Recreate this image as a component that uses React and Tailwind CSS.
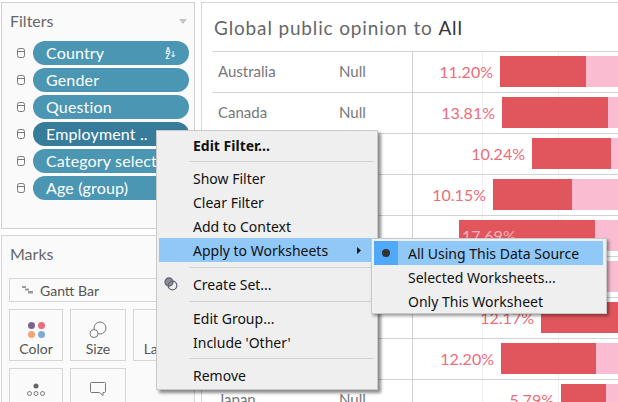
const filters = [
  { name: "Country", sorted: true },
  { name: "Gender" },
  { name: "Question" },
  { name: "Employment ..", active: true },
  { name: "Category select" },
  { name: "Age (group)" },
];

// start = x of the bar in the chart column, dark = width of the red part
const rows = [
  { country: "Australia", group: "Null", pct: "11.20%", start: 87, dark: 86 },
  { country: "Canada", group: "Null", pct: "13.81%", start: 89, dark: 106 },
  { country: "", group: "", pct: "10.24%", start: 119, dark: 79 },
  { country: "", group: "", pct: "10.15%", start: 80, dark: 79 },
  { country: "", group: "", pct: "17.69%", start: 46, dark: 136, inside: true },
  { country: "", group: "", pct: "", start: 159, dark: 30 },
  { country: "", group: "", pct: "12.17%", start: 128, dark: 200 },
  { country: "", group: "", pct: "12.20%", start: 88, dark: 95 },
  { country: "Japan", group: "Null", pct: "5.79%", start: 148, dark: 45 },
];

function Cylinder() {
  return (
    <svg width="10" height="12" viewBox="0 0 10 12" fill="none" stroke="#777" strokeWidth="1">
      <rect x="1.5" y="1.5" width="7" height="9" rx="2" />
      <path d="M1.5 4.5h7" />
    </svg>
  );
}

function FilterPill({ name, sorted, active }) {
  return (
    <div className="flex items-center">
      <div className="w-[31px] flex justify-center pl-[6px]">
        <Cylinder />
      </div>
      <div
        className={`w-[156px] h-[24px] rounded-full flex items-center justify-between pl-[13px] pr-[13px] text-white text-[16px] tracking-[0.15px] ${
          active ? "bg-[#387c9c]" : "bg-[#4a96b3]"
        }`}
      >
        <span className="whitespace-nowrap">{name}</span>
        {sorted && (
          <span className="flex items-center text-[7px] leading-[6px] font-bold">
            <span className="flex flex-col">
              <span>A</span>
              <span>Z</span>
            </span>
            <span className="text-[7px] leading-[7px]">↓</span>
          </span>
        )}
      </div>
    </div>
  );
}

function MarkButton({ label, children, width = "w-[54px]" }) {
  return (
    <div className={`${width} h-[52px] border border-[#d6d6d6] flex flex-col items-center shrink-0`}>
      <div className="h-[29px] flex items-end justify-center">{children}</div>
      <span className="text-[14px] text-[#555] leading-[22px] whitespace-nowrap">{label}</span>
    </div>
  );
}

function Separator({ h = "h-[9px]" }) {
  return (
    <div className={`${h} flex items-center pl-[32px] pr-[3px]`}>
      <div className="h-px w-full bg-[#d2d2d2]" />
    </div>
  );
}

function MenuItem({ children, bold, selected, icon, arrow }) {
  return (
    <div
      className={`h-[24px] mx-[2px] flex items-center pl-[34px] pr-[14px] relative ${
        bold ? "font-bold" : ""
      } ${selected ? "bg-[#90c8f7]" : ""}`}
    >
      {icon && <span className="absolute left-[5px] top-[5px]">{icon}</span>}
      <span className="whitespace-nowrap">{children}</span>
      {arrow && (
        <svg className="ml-auto" width="4" height="7" viewBox="0 0 4 7">
          <path d="M0 0l4 3.500-4 3.500z" fill="#111" />
        </svg>
      )}
    </div>
  );
}

function ChartRow({ country, group, pct, start, dark, inside }) {
  return (
    <div className="h-[41px] border-b border-[#d2d2d2] flex shrink-0">
      <div className="w-[127px] pl-[6px] pb-[2px] flex items-center text-[15px] text-[#777]">{country}</div>
      <div className="w-[73px] pb-[2px] flex items-center text-[15px] text-[#777]">{group}</div>
      <div className="flex-1 border-l border-[#d2d2d2] relative flex pt-[4px] overflow-hidden">
        <div className="absolute left-[69px] top-0 bottom-0 w-px bg-[#f0f0f0]" />
        <div className="absolute left-[145px] top-0 bottom-0 w-px bg-[#f0f0f0]" />
        <div
          className="relative h-[31px] flex items-center justify-end pr-[7px] text-[16px] text-[#ec6c78] shrink-0"
          style={{ width: start }}
        >
          {!inside && pct}
        </div>
        <div className="relative h-[31px] flex shrink-0">
          <div
            className="h-full bg-[#e1565c] flex items-center pl-[3px] text-[16px] text-[#f7b4c4]"
            style={{ width: dark }}
          >
            {inside && pct}
          </div>
          <div className="h-full w-[300px] bg-[#f9bcd1]" />
        </div>
      </div>
    </div>
  );
}

export default function App() {
  return (
    <div className="relative w-[618px] h-[402px] overflow-hidden bg-white flex gap-[6px] pl-[1px] pt-[2px] font-['Lato',sans-serif]">
      {/* left column */}
      <div className="w-[194px] flex flex-col gap-[6px] shrink-0">
        <div className="h-[227px] border border-[#d0d0d0] bg-[#fafafa] shrink-0">
          <div className="h-[38px] pb-[2px] flex items-center justify-between pl-[8px] pr-[7px] text-[16px] text-[#666]">
            <span>Filters</span>
            <svg width="8" height="5" viewBox="0 0 8 5">
              <path d="M0 0h8L4 5z" fill="#c4c4c4" />
            </svg>
          </div>
          <div className="flex flex-col gap-[3px]">
            {filters.map((f) => (
              <FilterPill key={f.name} {...f} />
            ))}
          </div>
        </div>
        <div className="flex-1 border border-[#d6d6d6] border-b-0 bg-[#fafafa] px-[7px]">
          <div className="h-[42px] pb-[6px] flex items-center text-[16px] text-[#666] pl-[1px]">Marks</div>
          <div className="h-[24px] border border-[#d6d6d6] flex items-center pl-[12px] gap-[7px] text-[14px] text-[#555]">
            <svg width="11" height="8" viewBox="0 0 11 8" fill="#999">
              <path d="M0 0h4v2H0zM3 2.500h4v2H3zM6 5h5v2.500H6z" />
            </svg>
            <span>Gantt Bar</span>
          </div>
          <div className="flex gap-[7px] mt-[7px]">
            <MarkButton label="Color">
              <div className="grid grid-cols-2 gap-x-[3px] gap-y-[2px]">
                <div className="w-[7px] h-[7px] rounded-full bg-[#7f6191]" />
                <div className="w-[7px] h-[7px] rounded-full bg-[#ee6a7e]" />
                <div className="w-[7px] h-[7px] rounded-full bg-[#f3a57a]" />
                <div className="w-[7px] h-[7px] rounded-full bg-[#7fa9d4]" />
              </div>
            </MarkButton>
            <MarkButton label="Size" width="w-[56px]">
              <svg width="18" height="17" viewBox="0 0 18 17" fill="none" stroke="#777" strokeWidth="1">
                <circle cx="11" cy="7" r="6" />
                <circle cx="5" cy="12.500" r="4" fill="#fafafa" />
              </svg>
            </MarkButton>
            <MarkButton label="Label">
              <div className="w-[8px] h-[14px] border border-[#777] rounded-[1px]" />
            </MarkButton>
          </div>
          <div className="flex gap-[7px] mt-[7px]">
            <MarkButton label="Detail">
              <svg width="20" height="14" viewBox="0 0 20 14" fill="none" stroke="#777" strokeWidth="1">
                <circle cx="10" cy="3" r="2.500" fill="#666" stroke="none" />
                <circle cx="3.500" cy="10.500" r="2" />
                <circle cx="10" cy="10.500" r="2" />
                <circle cx="16.500" cy="10.500" r="2" />
              </svg>
            </MarkButton>
            <MarkButton label="Tooltip" width="w-[56px]">
              <svg width="18" height="16" viewBox="0 0 18 16" fill="none" stroke="#777" strokeWidth="1">
                <path d="M2.500 1.500h13a1 1 0 0 1 1 1v8a1 1 0 0 1-1 1H14v3l-3.500-3h-8a1 1 0 0 1-1-1v-8a1 1 0 0 1 1-1z" />
              </svg>
            </MarkButton>
          </div>
        </div>
      </div>

      {/* view */}
      <div className="flex-1 border-t border-l border-[#d6d6d6] pl-[10px] min-w-0">
        <div className="h-[49px] pt-[2px] border-b border-[#d2d2d2] flex items-center pl-[2px] text-[19px] text-[#666] tracking-[0.85px] whitespace-nowrap">
          Global public opinion to&nbsp;<span className="text-[#333]">All</span>
        </div>
        {rows.map((r, i) => (
          <ChartRow key={i} {...r} />
        ))}
      </div>

      {/* context menu */}
      <div className="absolute left-[156px] top-[130px] w-[222px] bg-[#efefef] border border-[#c9c9c9] shadow-[3px_3px_3px_rgba(0,0,0,0.45)] pt-[2px] pb-[2px] text-[14px] text-[#111] font-['Noto_Sans',sans-serif] z-10">
        <MenuItem bold>Edit Filter...</MenuItem>
        <Separator />
        <MenuItem>Show Filter</MenuItem>
        <MenuItem>Clear Filter</MenuItem>
        <MenuItem>Add to Context</MenuItem>
        <MenuItem selected arrow>
          Apply to Worksheets
        </MenuItem>
        <Separator h="h-[10px]" />
        <MenuItem
          icon={
            <svg width="14" height="14" viewBox="0 0 14 14" fill="none" stroke="#667" strokeWidth="1.300">
              <circle cx="5" cy="5" r="4" fill="#8b8f98" />
              <circle cx="8.500" cy="8.500" r="4.300" />
            </svg>
          }
        >
          Create Set...
        </MenuItem>
        <Separator h="h-[10px]" />
        <MenuItem>Edit Group...</MenuItem>
        <MenuItem>Include 'Other'</MenuItem>
        <Separator />
        <MenuItem>Remove</MenuItem>
      </div>

      {/* submenu */}
      <div className="absolute left-[371px] top-[238px] w-[236px] bg-[#efefef] border border-[#c9c9c9] shadow-[2px_2px_3px_rgba(0,0,0,0.4)] pt-[2px] text-[14px] text-[#111] font-['Noto_Sans',sans-serif] z-20">
        <div className="h-[24px] ml-[2px] mr-[3px] flex items-center bg-[#90c8f7]">
          <div className="w-[24px] h-full bg-[#4fa9f8] flex items-center justify-center">
            <div className="w-[8px] h-[8px] rounded-full bg-[#333]" />
          </div>
          <span className="pl-[10px] whitespace-nowrap">All Using This Data Source</span>
        </div>
        <div className="h-[24px] flex items-center pl-[36px] whitespace-nowrap">Selected Worksheets...</div>
        <div className="h-[24px] flex items-center pl-[36px] whitespace-nowrap">Only This Worksheet</div>
      </div>
    </div>
  );
}
